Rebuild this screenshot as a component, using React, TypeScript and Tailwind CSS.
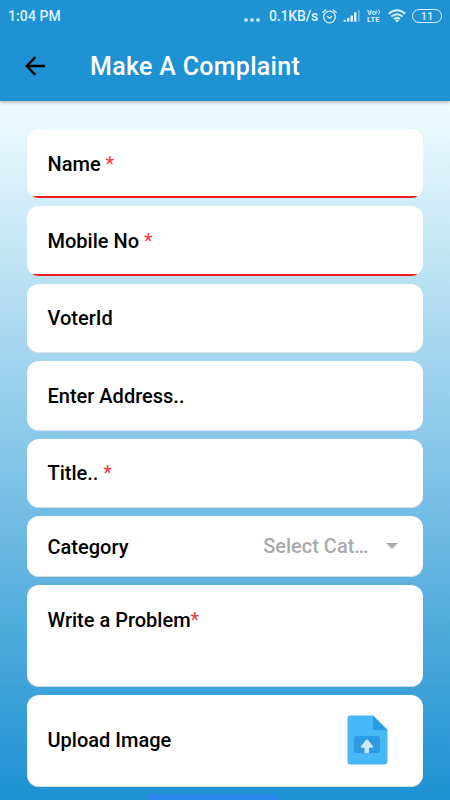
// complaint form screen

import type { ReactNode } from 'react';

const StatusBar = () => (
  <div className="flex h-8 items-center justify-between pl-[8px] pr-[8px] text-[#dff2ff]">
    <span className="text-[14px] font-medium leading-none tracking-[0.1px]">1:04 PM</span>

    <div className="flex items-center">
      {/* more notifications */}
      <svg width="16" height="4" viewBox="0 0 16 4" fill="currentColor" className="mt-[7px] mr-[9px]">
        <circle cx="2" cy="2" r="1.8" />
        <circle cx="8" cy="2" r="1.8" />
        <circle cx="14" cy="2" r="1.8" />
      </svg>
      <span className="w-[50px] whitespace-nowrap text-[14px] font-medium leading-none tracking-[-0.15px]">0.1KB/s</span>

      {/* alarm */}
      <svg width="15" height="15" viewBox="0 0 15 15" fill="none" stroke="currentColor" className="ml-[3px]">
        <circle cx="7.5" cy="8" r="5.8" strokeWidth="1.3" />
        <path d="M0.7 3.4 3.7 1M14.3 3.4 11.3 1" strokeWidth="1.3" strokeLinecap="round" />
        <path d="M5.2 7.2 7.5 9.2 10 7.2" strokeWidth="1.3" />
      </svg>

      {/* signal */}
      <svg width="18" height="13" viewBox="0 0 18 13" fill="currentColor" className="ml-[6px] mb-px">
        <rect x="0.5" y="10.7" width="2.4" height="2" rx="0.8" />
        <rect x="4" y="9" width="2.4" height="3.7" />
        <rect x="7.5" y="6.5" width="2.4" height="6.2" />
        <rect x="11" y="3.3" width="2.4" height="9.4" />
        <rect x="14.9" y="0.7" width="2" height="12" opacity="0.35" />
      </svg>

      {/* volte */}
      <div className="ml-[6px] flex w-[15px] flex-col gap-px text-[7.5px] font-bold leading-[7px]">
        <span className="flex h-[6px] items-center">
          Vo
          <svg width="5" height="6" viewBox="0 0 5 6" fill="none" stroke="currentColor" strokeWidth="0.9">
            <path d="M0.6 1.5q1 1.5 0 3M2.6 0.5q2 2.5 0 5" />
          </svg>
        </span>
        <span className="h-[7px] tracking-[0.2px]">LTE</span>
      </div>

      {/* wifi */}
      <svg width="18" height="14" viewBox="0 0 18 14" fill="none" stroke="currentColor" strokeWidth="1.8" className="ml-[6px]">
        <path d="M0.8 4.8Q9-2.2 17.2 4.8" />
        <path d="M3.4 7.5Q9 2.9 14.6 7.5" />
        <path d="M5.9 10Q9 7.4 12.1 10" />
        <path d="M6.9 11.1 9 13.4 11.1 11.1Q9 9.7 6.9 11.1Z" fill="currentColor" stroke="none" />
      </svg>

      {/* battery */}
      <div className="ml-[6px] flex h-[14px] w-[30px] items-center justify-center rounded-full border-[1.5px] border-current text-[11px] font-medium leading-none">
        11
      </div>
    </div>
  </div>
);

const Header = () => (
  <header className="relative h-[101px] shrink-0 bg-[#1e92d3] shadow-[0_1px_4px_rgba(0,0,0,0.35)]">
    <StatusBar />
    <div className="flex h-[68px] items-center pl-[25px]">
      <svg width="21" height="20" viewBox="0 0 21 20" fill="none" stroke="black" strokeWidth="2.3">
        <path d="M20 10H2.5M10.4 1 1.8 10 10.4 19" />
      </svg>
      <h1 className="ml-[44px] text-[25px] font-medium leading-none tracking-[0.3px] text-white">
        Make A Complaint
      </h1>
    </div>
  </header>
);

type FieldProps = {
  label: string;
  required?: boolean;
  className: string;
  children?: ReactNode;
};

const Field = ({ label, required, className, children }: FieldProps) => (
  <div className={`flex shrink-0 items-center justify-between overflow-hidden rounded-[12px] bg-white pl-[20.25px] ${className}`}>
    <label className="whitespace-pre text-[20px] font-medium leading-6 text-black">
      {label}
      {required && <span className="font-normal text-[#f53b40]">*</span>}
    </label>
    {children}
  </div>
);

const ErrorLine = () => <span className="absolute inset-x-0 bottom-0 h-[2px] bg-[#f01c20]" />;

const UploadIcon = () => (
  <svg width="41" height="50" viewBox="0 0 41 50" className="mr-[34.5px]">
    <path d="M3 0.5H26L40.5 15V46.5Q40.5 49.5 37.5 49.5H3.5Q0.5 49.5 0.5 46.5V3Q0.5 0.5 3 0.5Z" fill="#46b8f5" />
    <path d="M26 0.5 40.5 15H26Z" fill="#2b9ce3" />
    <rect x="7" y="21" width="26" height="17" rx="3" fill="#2b9ce3" />
    <path d="M20 24.5Q20.5 24.5 21 25L26 31.3Q26.5 32.5 25 32.8H22V38H17.5V32.8H15Q13.5 32.5 14 31.3L19 25Q19.5 24.5 20 24.5Z" fill="#cdeaf8" />
  </svg>
);

export default function App() {
  return (
    <div className="flex h-[800px] w-[450px] flex-col overflow-hidden bg-[#1e92d3] font-['Roboto',sans-serif]">
      <Header />

      <main className="flex min-h-0 flex-1 flex-col gap-2 bg-linear-to-b/srgb from-[#f0fcff] to-[#1c91d2] pl-[27.25px] pr-[27.5px] pt-[27.75px]">
        <Field label="Name " required className="relative h-[69.5px]">
          <ErrorLine />
        </Field>
        <Field label="Mobile No " required className="relative h-[69.5px]">
          <ErrorLine />
        </Field>
        <Field label="VoterId" className="h-[69.5px] border-b border-[#d5dde1]" />
        <Field label="Enter Address.." className="h-[69.5px] border-b border-[#d5dde1]" />
        <Field label="Title.. " required className="h-[69.5px] border-b border-[#d5dde1]" />

        {/* category dropdown */}
        <Field label="Category" className="h-[61px] border-b border-[#d5dde1] pt-px">
          <div className="flex items-center pr-[25px] pb-[2px] text-[#aaaaaa]">
            <span className="text-[20px] font-medium leading-6">Select Cat…</span>
            <svg width="12" height="6" viewBox="0 0 12 6" fill="currentColor" className="ml-[17px]">
              <path d="M0 0H12L6 6Z" />
            </svg>
          </div>
        </Field>

        <Field label="Write a Problem" required className="h-[102px] border-b border-[#d5dde1] pb-[32px]" />

        <Field label="Upload Image" className="h-[91.25px] border-b border-[#d5dde1]">
          <UploadIcon />
        </Field>

        {/* submit button, cut off by the bottom edge */}
        <button type="button" aria-label="Submit" className="-mt-px -ml-[24px] h-12 w-[131px] shrink-0 self-center rounded-[5px] bg-[#2b86ec]" />
      </main>
    </div>
  );
}
